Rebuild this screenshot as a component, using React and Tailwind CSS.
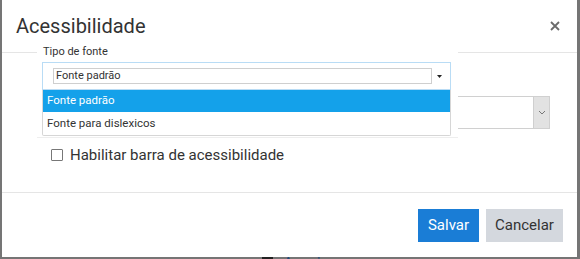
import React from "react";

const font = { fontFamily: "Roboto, 'Noto Sans', Arial, sans-serif" };

const FontPopup = () => {
  // the open font dropdown, lying over the header line and the select below
  return (
    <div className="absolute left-[35px] top-[42px] w-[421px] h-[96px] bg-white border-b border-[#eeeeee]">
      <div className="pl-[6px] pt-[3px] text-[11px] leading-[14px] text-[#333]">Tipo de fonte</div>
      <div className="ml-[5px] mt-[3px] w-[409px]">
        <div className="flex items-center h-[28px] border border-[#b9dcf5] pl-[10px] pr-[4px]">
          <div className="flex-1 h-[16px] border border-[#cfcfcf] px-[2px] text-[11px] leading-[14px] text-[#333]">
            Fonte padrão
          </div>
          <div className="w-[14px] flex justify-center">
            <svg width="5" height="3" viewBox="0 0 5 3">
              <path d="M0 0h5L2.5 3z" fill="#222" />
            </svg>
          </div>
        </div>
        <div className="border-x border-b border-[#d6d6d6] rounded-b-[2px]">
          <div className="h-[22px] flex items-center pl-[4px] bg-[#14a1ea] text-white text-[11.5px]">
            Fonte padrão
          </div>
          <div className="h-[23px] flex items-center pl-[4px] text-[#333] text-[11.5px]">
            Fonte para dislexicos
          </div>
        </div>
      </div>
    </div>
  );
};

const App = () => {
  return (
    <div className="w-[580px] h-[259px] bg-[#757575] overflow-hidden" style={font}>
      <div className="relative ml-[2px] w-[575px] h-[257px] bg-white flex flex-col">
        {/* Header */}
        <div className="h-[53px] flex items-center justify-between pl-[14px] pr-[17px] border-b border-[#e5e5e5]">
          <h4 className="text-[20px] text-[#333]">Acessibilidade</h4>
          <svg width="10" height="10" viewBox="0 0 10 10">
            <path d="M1 1l8 8M9 1l-8 8" stroke="#6b6b6b" strokeWidth="1.8" />
          </svg>
        </div>

        {/* Body */}
        <div className="h-[140px] pt-[43px] pl-[38px] border-b border-[#e5e5e5]">
          <div className="flex w-[510px] h-[33px] border border-[#d0d0d0]">
            <div className="flex-1 bg-white" />
            <div className="w-[16px] bg-[#e2e2e2] border-l border-[#cfcfcf] flex items-center justify-center">
              <svg width="8" height="5" viewBox="0 0 8 5">
                <path d="M1 1l3 3 3-3" stroke="#777" strokeWidth="1" fill="none" />
              </svg>
            </div>
          </div>
          <label className="flex items-center gap-[7px] mt-[15px] ml-[11px]">
            <span className="w-[12px] h-[12px] border border-[#777] rounded-[1px] bg-white" />
            <span className="text-[15px] text-[#333]">Habilitar barra de acessibilidade</span>
          </label>
        </div>

        {/* Footer */}
        <div className="flex justify-end gap-[7px] pt-[16px] pr-[14px]">
          <button className="w-[61px] h-[33px] bg-[#1a7dd6] text-white text-[15px]">Salvar</button>
          <button className="w-[77px] h-[33px] bg-[#d4d8de] text-[#333] text-[15px]">Cancelar</button>
        </div>

        <FontPopup />
      </div>

      {/* page behind the backdrop, mostly hidden */}
      <div className="flex items-start gap-[10px] pl-[262px] -mt-[1px]">
        <span className="mt-[1px] w-[11px] h-[3px] bg-[#222]" />
        <span className="text-[16px] leading-none text-[#234a78]">Arquivos</span>
      </div>
    </div>
  );
};

export default App;
